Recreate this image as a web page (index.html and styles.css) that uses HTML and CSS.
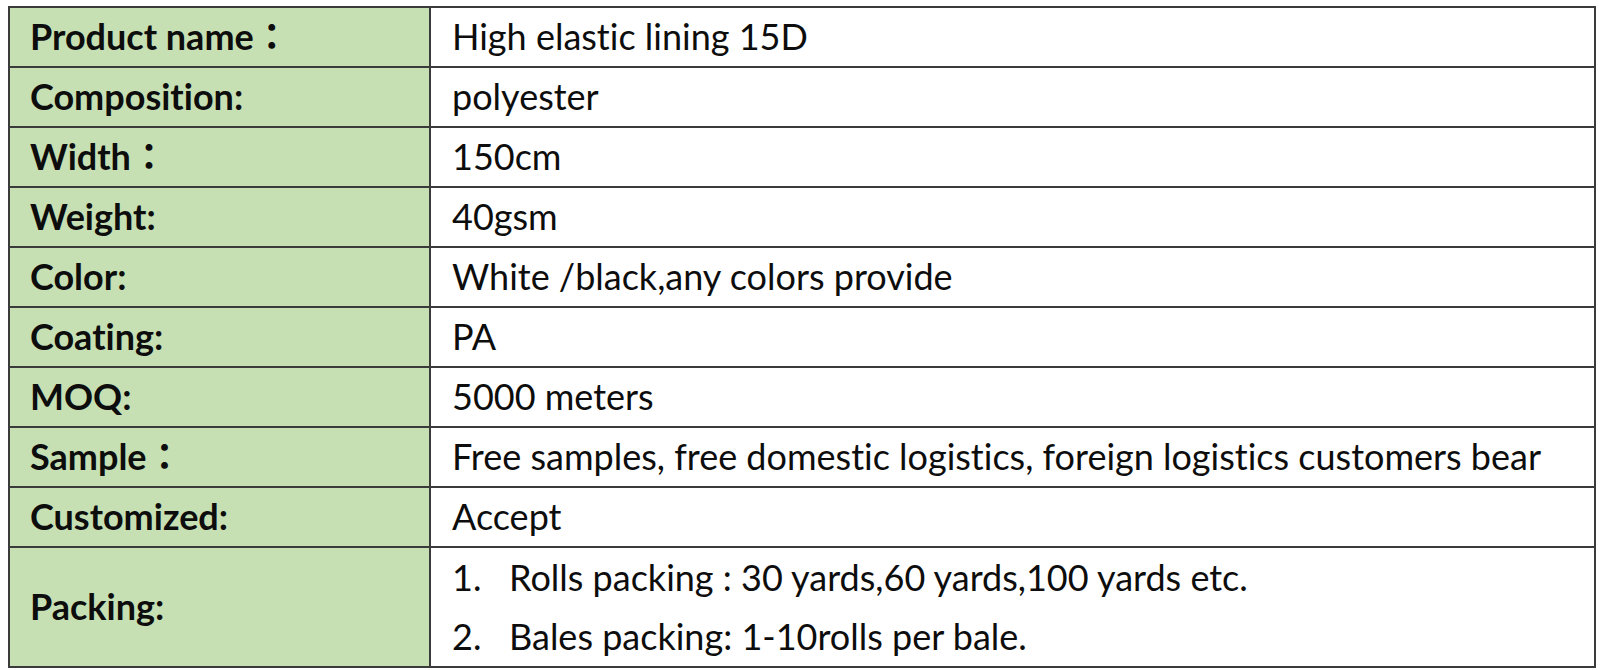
FILE: index.html
```html
<!DOCTYPE html>
<html lang="en">
<head>
<meta charset="utf-8">
<title>Product specification</title>
<link rel="stylesheet" href="styles.css">
</head>
<body>
<div class="sheet">
  <table class="spec">
    <tbody>
      <tr><th class="label">Product name：</th><td class="value">High elastic lining 15D</td></tr>
      <tr><th class="label">Composition:</th><td class="value">polyester</td></tr>
      <tr><th class="label">Width：</th><td class="value">150cm</td></tr>
      <tr><th class="label">Weight:</th><td class="value">40gsm</td></tr>
      <tr><th class="label">Color:</th><td class="value">White /black,any colors provide</td></tr>
      <tr><th class="label">Coating:</th><td class="value">PA</td></tr>
      <tr><th class="label">MOQ:</th><td class="value">5000 meters</td></tr>
      <tr><th class="label">Sample：</th><td class="value">Free samples, free domestic logistics, foreign logistics customers bear</td></tr>
      <tr><th class="label">Customized:</th><td class="value">Accept</td></tr>
      <tr class="tall">
        <th class="label">Packing:</th>
        <td class="value">
          <ol class="steps">
            <li class="step"><span class="num">1.</span><span>Rolls packing : 30 yards,60 yards,100 yards etc.</span></li>
            <li class="step"><span class="num">2.</span><span>Bales packing: 1-10rolls per bale.</span></li>
          </ol>
        </td>
      </tr>
    </tbody>
  </table>
</div>
</body>
</html>
```
FILE: styles.css
```css
html, body {
  margin: 0;
  padding: 0;
  background: #ffffff;
}

body {
  font-family: "Lato", "Noto Sans CJK JP", sans-serif;
  color: #0d0d0d;
  font-variant-ligatures: none;
  font-feature-settings: "liga" 0, "clig" 0, "dlig" 0;
}

.sheet {
  padding: 6px 0 0 8px;
}

.spec {
  border-collapse: collapse;
  width: 1588px;
  table-layout: fixed;
  font-size: 36px;
}

.spec tr {
  height: 60px;
}

.spec tr.tall {
  height: 118px;
}

.label,
.value {
  border: 2px solid #3b3b3b;
  padding: 0 0 0 20px;
  text-align: left;
  vertical-align: middle;
  white-space: nowrap;
  line-height: 1.2;
}

.label {
  width: 399px;
  background: #c6e0b4;
  font-weight: 700;
}

.value {
  background: #ffffff;
  font-weight: 400;
  padding-left: 21px;
}

.steps {
  list-style: none;
  margin: 0;
  padding: 0;
}

.step {
  display: flex;
  height: 59px;
  align-items: center;
}

.num {
  width: 57px;
  flex: none;
}
```
